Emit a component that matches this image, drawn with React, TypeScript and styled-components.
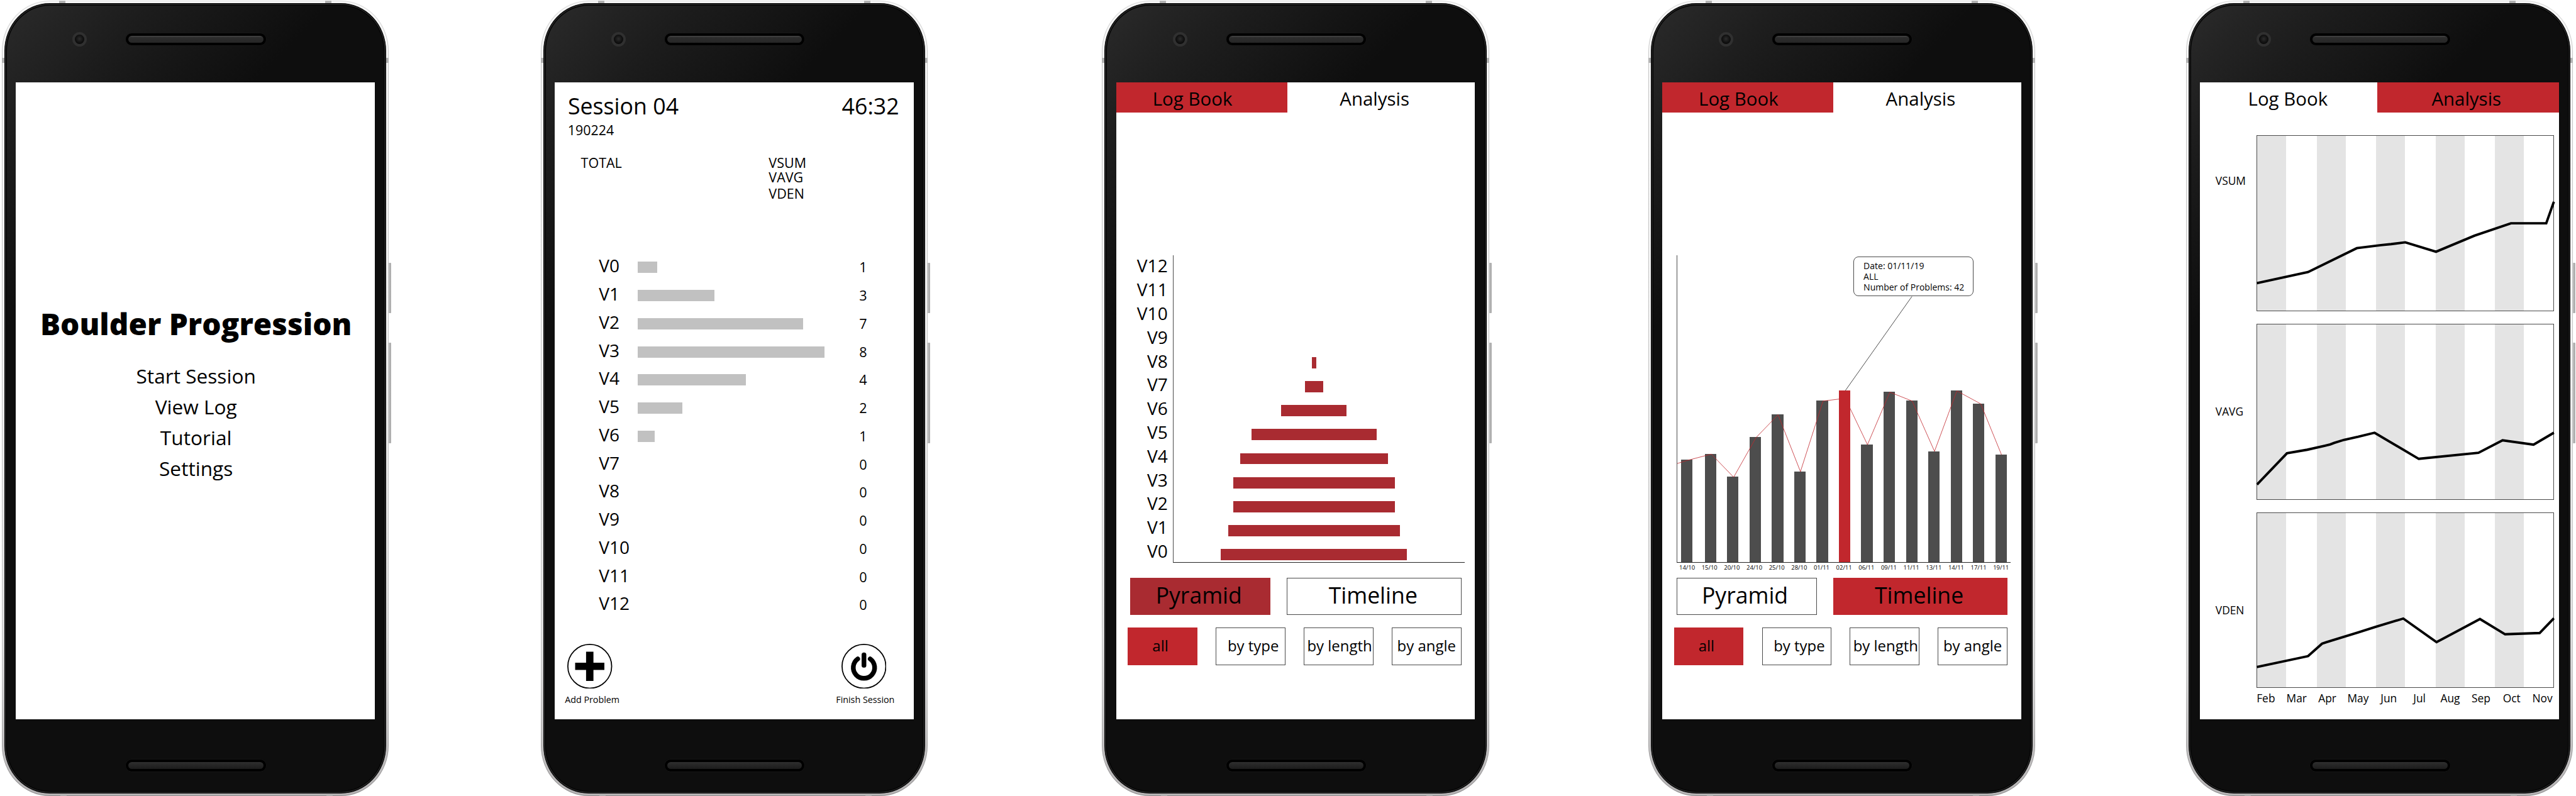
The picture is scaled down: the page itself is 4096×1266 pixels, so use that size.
import React from 'react';
import styled, { createGlobalStyle } from 'styled-components';

const RED = '#c1272d';
const CRIMSON = '#a92b31';
const LINE = '#4a4a4a';

const GlobalStyle = createGlobalStyle`
  html, body { margin: 0; padding: 0; background: #fff; }
  body { width: 4096px; height: 1266px; overflow: hidden; color: #000; font-family: "Open Sans", "Noto Sans", sans-serif; }
  *, *::before, *::after { box-sizing: border-box; }
  svg { display: block; }
`;

/* ---------- device ---------- */

const Board = styled.main`
  display: flex;
  align-items: flex-start;
  width: 4096px;
  height: 1266px;
  padding-top: 1px;
  overflow: hidden;
`;

const Frame = styled.section<{ $gap: number }>`
  position: relative;
  flex: none;
  width: 615.4px;
  height: 1264.6px;
  margin-left: ${(p) => p.$gap}px;
  padding: 1px;
  border-radius: 76px / 80px;
  background: linear-gradient(180deg, #dcdcdc 0, #c4c4c4 8%, #c2c2c2 85%, #8e8c8d 100%);
`;

const Rim = styled.div`
  width: 100%;
  height: 100%;
  padding: 3px;
  border-radius: 75px / 79px;
  background: linear-gradient(180deg, #f6f6f6 0, #f3f3f3 40%, #dedede 80%, #b5b3b4 100%);
`;

const Body = styled.div`
  display: flex;
  flex-direction: column;
  width: 100%;
  height: 100%;
  padding: 0 17.4px;
  border: 1px solid #000;
  border-radius: 72px / 76px;
  background: linear-gradient(135deg, #2b2b2b 0, #262626 4%, #1c1c1c 13%, #0e0e0e 28%, #0e0e0e 100%);
  box-shadow: inset 0 0 0 1.5px #2b2b2b, inset 0 0 0 3px #050505;
`;

const Band = styled.i<{ $side: 'top' | 'bottom' | 'left' | 'right'; $at: number }>`
  position: absolute;
  background: #b2b2b2;
  ${(p) =>
    p.$side === 'top' || p.$side === 'bottom'
      ? `${p.$side}: 0; left: ${p.$at}px; width: 10px; height: 4px;`
      : `${p.$side}: 0; top: ${p.$at}px; width: 4px; height: 8px;`}
`;

const SideButton = styled.i<{ $top: number; $height: number }>`
  position: absolute;
  left: 615.4px;
  top: ${(p) => p.$top}px;
  width: 4px;
  height: ${(p) => p.$height}px;
  border-radius: 0 1px 1px 0;
  background: linear-gradient(90deg, #c9c9c9, #a9a9a9 60%, #bdbdbd);
`;

const Forehead = styled.div`
  flex: none;
  display: flex;
  align-items: flex-start;
  height: 124.6px;
  padding: 45px 0 0 90px;
`;

const Camera = styled.div`
  width: 23px;
  height: 23px;
  border: 4px solid #303030;
  border-radius: 50%;
  background: radial-gradient(circle at 50% 45%, #2c2c2c 0, #151515 45%, #080808 75%);
`;

const Speaker = styled.div<{ $dim?: boolean }>`
  width: 222.4px;
  height: ${(p) => (p.$dim ? 19.8 : 18.8)}px;
  margin: 2px 0 0 62px;
  border: 4px solid #000;
  border-radius: 10px;
  background: ${(p) => (p.$dim ? 'linear-gradient(180deg, #2e2e2e, #1c1c1c)' : 'linear-gradient(180deg, #484848 0, #2c2c2c 25%, #262626 100%)')};
  box-shadow: 0 0 1px 0.5px #1c1c1c;
`;

const Display = styled.div`
  flex: none;
  height: 1013.6px;
  background: #fff;
  overflow: hidden;
`;

const Chin = styled.div`
  flex: 1;
  display: flex;
  align-items: flex-start;
  padding: 61.5px 0 0 113px;
`;

function Phone({ gap, children }: { gap: number; children: React.ReactNode }) {
  return (
    <Frame $gap={gap}>
      <Rim>
        <Body>
          <Forehead>
            <Camera />
            <Speaker />
          </Forehead>
          <Display>{children}</Display>
          <Chin>
            <Speaker $dim />
          </Chin>
        </Body>
      </Rim>
      <Band $side="top" $at={91.5} />
      <Band $side="top" $at={514.5} />
      <Band $side="left" $at={91} />
      <Band $side="right" $at={91} />
      <Band $side="bottom" $at={93.5} />
      <Band $side="bottom" $at={516} />
      <SideButton $top={417} $height={80} />
      <SideButton $top={543.5} $height={160} />
    </Frame>
  );
}

/* ---------- home ---------- */

const Home = styled.div`
  display: flex;
  flex-direction: column;
  align-items: center;
  width: 573px;
  padding-top: 354px;
`;

const Title = styled.h1`
  margin: 0 0 28.5px;
  font-size: 47.7px;
  font-weight: 800;
  line-height: 60px;
  white-space: nowrap;
`;

const MenuItem = styled.div`
  font-size: 31.65px;
  line-height: 49px;
`;

/* ---------- session ---------- */

const Session = styled.div`
  display: flex;
  flex-direction: column;
  height: 100%;
  padding-top: 13px;
`;

const SessionHead = styled.header`
  display: flex;
  justify-content: space-between;
  padding: 0 23px 0 21px;
  font-size: 35.7px;
  line-height: 48px;
`;

const SessionDate = styled.div`
  padding-left: 20.8px;
  font-size: 21.4px;
  line-height: 30px;
`;

const Stats = styled.div`
  display: grid;
  grid-template-columns: 298.8px 1fr;
  height: 178.9px;
  padding: 25.4px 0 0 41.6px;
  font-size: 21.5px;
  line-height: 24px;
`;

const Stat = styled.div<{ $gap?: number }>`
  margin-top: ${(p) => p.$gap ?? 0}px;
  white-space: nowrap;
`;

const GradeRow = styled.div`
  display: grid;
  grid-template-columns: 61.7px 352.3px 1fr;
  height: 44.75px;
  padding-left: 70.3px;
  font-size: 28.1px;
  line-height: 44.75px;
`;

const GradeBar = styled.div<{ $width: number }>`
  width: ${(p) => p.$width}px;
  height: 17.8px;
  margin-top: 16px;
  background: #c1c1c1;
`;

const Count = styled.div`
  padding-top: 3px;
  font-size: 21.6px;
`;

const Actions = styled.footer`
  display: flex;
  justify-content: space-between;
  margin-top: 41.6px;
  padding: 0 30.2px 0 16.2px;
`;

const Action = styled.div<{ $inset: number }>`
  font-size: 14.3px;
  line-height: 20px;
  svg { margin: 0 0 7.6px ${(p) => p.$inset}px; }
`;

const grades: [string, number, number][] = [
  ['V0', 31.1, 1], ['V1', 121.7, 3], ['V2', 263.5, 7], ['V3', 296.7, 8], ['V4', 171.8, 4], ['V5', 71, 2], ['V6', 27.5, 1],
  ['V7', 0, 0], ['V8', 0, 0], ['V9', 0, 0], ['V10', 0, 0], ['V11', 0, 0], ['V12', 0, 0],
];

const PlusIcon = () => (
  <svg width="71.5" height="71.5" viewBox="0 0 177 177">
    <circle cx="88.5" cy="88.5" r="86.2" fill="none" stroke="#000" strokeWidth="4.4" />
    <path d="M74 31H103V74H146V103H103V146H74V103H31V74H74Z" fill="#000" />
  </svg>
);

const PowerIcon = () => (
  <svg width="71.5" height="71.5" viewBox="0 0 177 177">
    <circle cx="88.5" cy="88.5" r="86.2" fill="none" stroke="#000" strokeWidth="4.4" />
    <g fill="none" stroke="#000" strokeWidth="18.5" strokeLinecap="round">
      <path d="M88.5 43V84.5" />
      <path d="M64 59.5A42 42 0 1 0 113 59.5" />
    </g>
  </svg>
);

/* ---------- log book ---------- */

const Tabs = styled.nav`
  display: flex;
  height: 48.6px;
  font-size: 29.45px;
  line-height: 52px;
`;

const Tab = styled.div<{ $width: number; $indent: number; $active?: boolean }>`
  flex: none;
  width: ${(p) => p.$width}px;
  height: 48.6px;
  padding-left: ${(p) => p.$indent}px;
  background: ${(p) => (p.$active ? RED : '#fff')};
`;

const PyramidChart = styled.div`
  display: grid;
  grid-template-columns: 82px 1fr;
  height: 491.3px;
  margin-top: 224.8px;
  padding-right: 16.6px;
`;

const GradeAxis = styled.div`
  padding-top: 0.4px;
  font-size: 28.1px;
  line-height: 37.79px;
  text-align: right;
`;

const PyramidPlot = styled.div`
  display: flex;
  flex-direction: column;
  align-items: center;
  justify-content: flex-end;
  gap: 20.4px;
  height: 489.4px;
  margin: 1.6px 0 0 8px;
  padding: 0 16px 2.8px 0;
  border-left: 1px solid ${LINE};
  border-bottom: 1px solid #222;
`;

const PyramidBar = styled.div<{ $width: number }>`
  width: ${(p) => p.$width}px;
  height: 17.8px;
  background: ${CRIMSON};
`;

const pyramid = [7.3, 29.3, 103.8, 198.7, 235, 257.2, 257.2, 273.4, 296.4];

const Switcher = styled.div`
  display: grid;
  grid-template-columns: 222.9px 277.4px;
  gap: 26px;
  margin-top: 23.6px;
  padding-left: 22.7px;
  font-size: 35.6px;
  line-height: 53.8px;
`;

const Filters = styled.div`
  display: grid;
  grid-template-columns: repeat(4, 110.8px);
  gap: 29.1px;
  margin-top: 20.2px;
  padding-left: 18.6px;
  font-size: 23.95px;
  line-height: 55px;
`;

const Choice = styled.div<{ $indent: number; $fill?: string }>`
  height: 59.4px;
  padding-left: ${(p) => p.$indent - 1}px;
  border: 1px solid ${(p) => p.$fill ?? LINE};
  background: ${(p) => p.$fill ?? '#fff'};
  white-space: nowrap;
`;

function Controls({ pyramidFill, timelineFill }: { pyramidFill?: string; timelineFill?: string }) {
  return (
    <>
      <Switcher>
        <Choice $indent={40.2} $fill={pyramidFill}>Pyramid</Choice>
        <Choice $indent={66.3} $fill={timelineFill}>Timeline</Choice>
      </Switcher>
      <Filters>
        <Choice $indent={39} $fill={RED}>all</Choice>
        <Choice $indent={18.7}>by type</Choice>
        <Choice $indent={5.3}>by length</Choice>
        <Choice $indent={8.6}>by angle</Choice>
      </Filters>
    </>
  );
}

/* ---------- timeline ---------- */

const TimelineChart = styled.div`
  height: 491.3px;
  margin-top: 224.8px;
  padding: 1.6px 0 0 22.6px;
`;

const TimelinePlot = styled.div`
  position: relative;
  display: flex;
  align-items: flex-end;
  gap: 17.35px;
  width: 531.4px;
  height: 489.4px;
  padding-left: 6px;
  border-left: 1px solid ${LINE};
  border-bottom: 1px solid #222;
`;

const DayBar = styled.div<{ $height: number; $first?: boolean; $active?: boolean }>`
  position: relative;
  z-index: ${(p) => (p.$active ? 2 : 0)};
  flex: none;
  width: 18.2px;
  height: ${(p) => p.$height}px;
  margin-right: ${(p) => (p.$first ? 2.6 : 0)}px;
  background: ${(p) => (p.$active ? RED : '#4d4d4d')};
`;

const Trend = styled.svg`
  position: absolute;
  z-index: 1;
  left: 0;
  top: 0;
`;

const Tooltip = styled.div`
  position: absolute;
  z-index: 3;
  left: 280.8px;
  top: 2px;
  width: 190.4px;
  height: 63px;
  padding: 6.2px 0 0 14.7px;
  border: 1px solid ${LINE};
  border-radius: 8px;
  background: #fff;
  font-size: 14px;
  line-height: 16.95px;
  white-space: nowrap;
`;

const Dates = styled.div`
  display: flex;
  height: 14px;
  margin: 0.6px 0 -14.6px;
  padding-left: 21.7px;
  font-size: 9.45px;
  line-height: 14px;
`;

const DateLabel = styled.div`
  flex: none;
  width: 35.67px;
  text-align: center;
`;

const days: [string, number][] = [
  ['14/10', 162.7], ['15/10', 172.4], ['20/10', 135.6], ['24/10', 198.6], ['25/10', 235], ['28/10', 144.1], ['01/11', 256.8],
  ['02/11', 272.9], ['06/11', 187.3], ['09/11', 270.5], ['11/11', 256.8], ['13/11', 176.4], ['14/11', 272.9], ['17/11', 252.3], ['19/11', 171.2],
];

/* ---------- analysis ---------- */

const Analysis = styled.div`
  display: flex;
  flex-direction: column;
  gap: 20px;
  padding-top: 35.8px;
`;

const Metric = styled.div`
  display: grid;
  grid-template-columns: 65px 473.4px;
  padding-left: 24.6px;
  height: 279.8px;
  font-size: 17.35px;
  line-height: 24px;
`;

const MetricName = styled.div<{ $top: number }>`
  padding-top: ${(p) => p.$top}px;
`;

const MetricPlot = styled.div`
  border: 1px solid ${LINE};
  background: repeating-linear-gradient(90deg, #e4e4e4 0, #e4e4e4 46.4px, #fff 46.4px, #fff 94.5px);
  svg { margin: -1px; overflow: visible; }
`;

const Months = styled.div`
  display: flex;
  padding: 3.2px 0 0 80.2px;
  font-size: 17.4px;
  line-height: 24px;
`;

const Month = styled.div`
  flex: none;
  width: 48.86px;
  text-align: center;
`;

const metrics = [
  { name: 'VSUM', top: 59.6, points: '1,583 203,539 395,445 425,441 490,433 530,429 586,422 707,459 858,396 1002,347 1141,347 1171,262' },
  { name: 'VAVG', top: 127.3, points: '2,633 120,510 200,496 270,480 290,475 306,469 345,457 400,445 465,429 639,532 874,508 969,459 1091,476 1171,429' },
  { name: 'VDEN', top: 143, points: '1,609 203,566 258,517 275,511 400,473 468,451 578,418 709,511 880,420 979,480 1115,475 1171,417' },
];

const months = ['Feb', 'Mar', 'Apr', 'May', 'Jun', 'Jul', 'Aug', 'Sep', 'Oct', 'Nov'];

export default function App() {
  return (
    <>
      <GlobalStyle />
      <Board>
        <Phone gap={2.8}>
          <Home>
            <Title>Boulder Progression</Title>
            <MenuItem>Start Session</MenuItem>
            <MenuItem>View Log</MenuItem>
            <MenuItem>Tutorial</MenuItem>
            <MenuItem>Settings</MenuItem>
          </Home>
        </Phone>

        <Phone gap={241.4}>
          <Session>
            <SessionHead>
              <span>Session 04</span>
              <span>46:32</span>
            </SessionHead>
            <SessionDate>190224</SessionDate>
            <Stats>
              <Stat>TOTAL</Stat>
              <div>
                <Stat>VSUM</Stat>
                <Stat $gap={-0.6}>VAVG</Stat>
                <Stat $gap={1.4}>VDEN</Stat>
              </div>
            </Stats>
            {grades.map(([grade, width, count]) => (
              <GradeRow key={grade}>
                <span>{grade}</span>
                <GradeBar $width={width} />
                <Count>{count}</Count>
              </GradeRow>
            ))}
            <Actions>
              <Action $inset={4}>
                <PlusIcon />
                Add Problem
              </Action>
              <Action $inset={8.5}>
                <PowerIcon />
                Finish Session
              </Action>
            </Actions>
          </Session>
        </Phone>

        <Phone gap={277.4}>
          <Tabs>
            <Tab $width={272.2} $indent={58} $active>Log Book</Tab>
            <Tab $width={299} $indent={83.4}>Analysis</Tab>
          </Tabs>
          <PyramidChart>
            <GradeAxis>
              {grades.map(([grade]) => <div key={grade}>{grade}</div>).reverse()}
            </GradeAxis>
            <PyramidPlot>
              {pyramid.map((width, i) => <PyramidBar key={i} $width={width} />)}
            </PyramidPlot>
          </PyramidChart>
          <Controls pyramidFill={CRIMSON} />
        </Phone>

        <Phone gap={252.9}>
          <Tabs>
            <Tab $width={272.2} $indent={58} $active>Log Book</Tab>
            <Tab $width={299} $indent={83.4}>Analysis</Tab>
          </Tabs>
          <TimelineChart>
            <TimelinePlot>
              {days.map(([day, height], i) => (
                <DayBar key={day} $height={height} $first={i === 0} $active={day === '02/11'} />
              ))}
              <Trend width="531" height="489" viewBox="136 -564.2 1315.2 1211.1" fill="none">
                <polyline
                  stroke={RED}
                  strokeWidth="2"
                  points="136,256 175,244 270,219 358,310 446,154 533,64 621,288 710,10 775,2 797.5,-1 885,182 973,-25 1061,10 1149,208 1237,-30 1331,21 1413,222"
                />
                <path stroke="#222" strokeWidth="2" d="M1060 -402L797 -30" />
              </Trend>
              <Tooltip>
                Date: 01/11/19
                <br />
                ALL
                <br />
                Number of Problems: 42
              </Tooltip>
            </TimelinePlot>
          </TimelineChart>
          <Dates>
            {days.map(([day]) => <DateLabel key={day}>{day}</DateLabel>)}
          </Dates>
          <Controls timelineFill={RED} />
        </Phone>

        <Phone gap={239.8}>
          <Tabs>
            <Tab $width={282.2} $indent={76.3}>Log Book</Tab>
            <Tab $width={289.2} $indent={86} $active>Analysis</Tab>
          </Tabs>
          <Analysis>
            {metrics.map(({ name, top, points }) => (
              <Metric key={name}>
                <MetricName $top={top}>{name}</MetricName>
                <MetricPlot>
                  <svg width="473" height="279.8" viewBox="0 0 1171.5 693" fill="none">
                    <polyline points={points} stroke="#000" strokeWidth="9.6" />
                  </svg>
                </MetricPlot>
              </Metric>
            ))}
          </Analysis>
          <Months>
            {months.map((month) => <Month key={month}>{month}</Month>)}
          </Months>
        </Phone>
      </Board>
    </>
  );
}
